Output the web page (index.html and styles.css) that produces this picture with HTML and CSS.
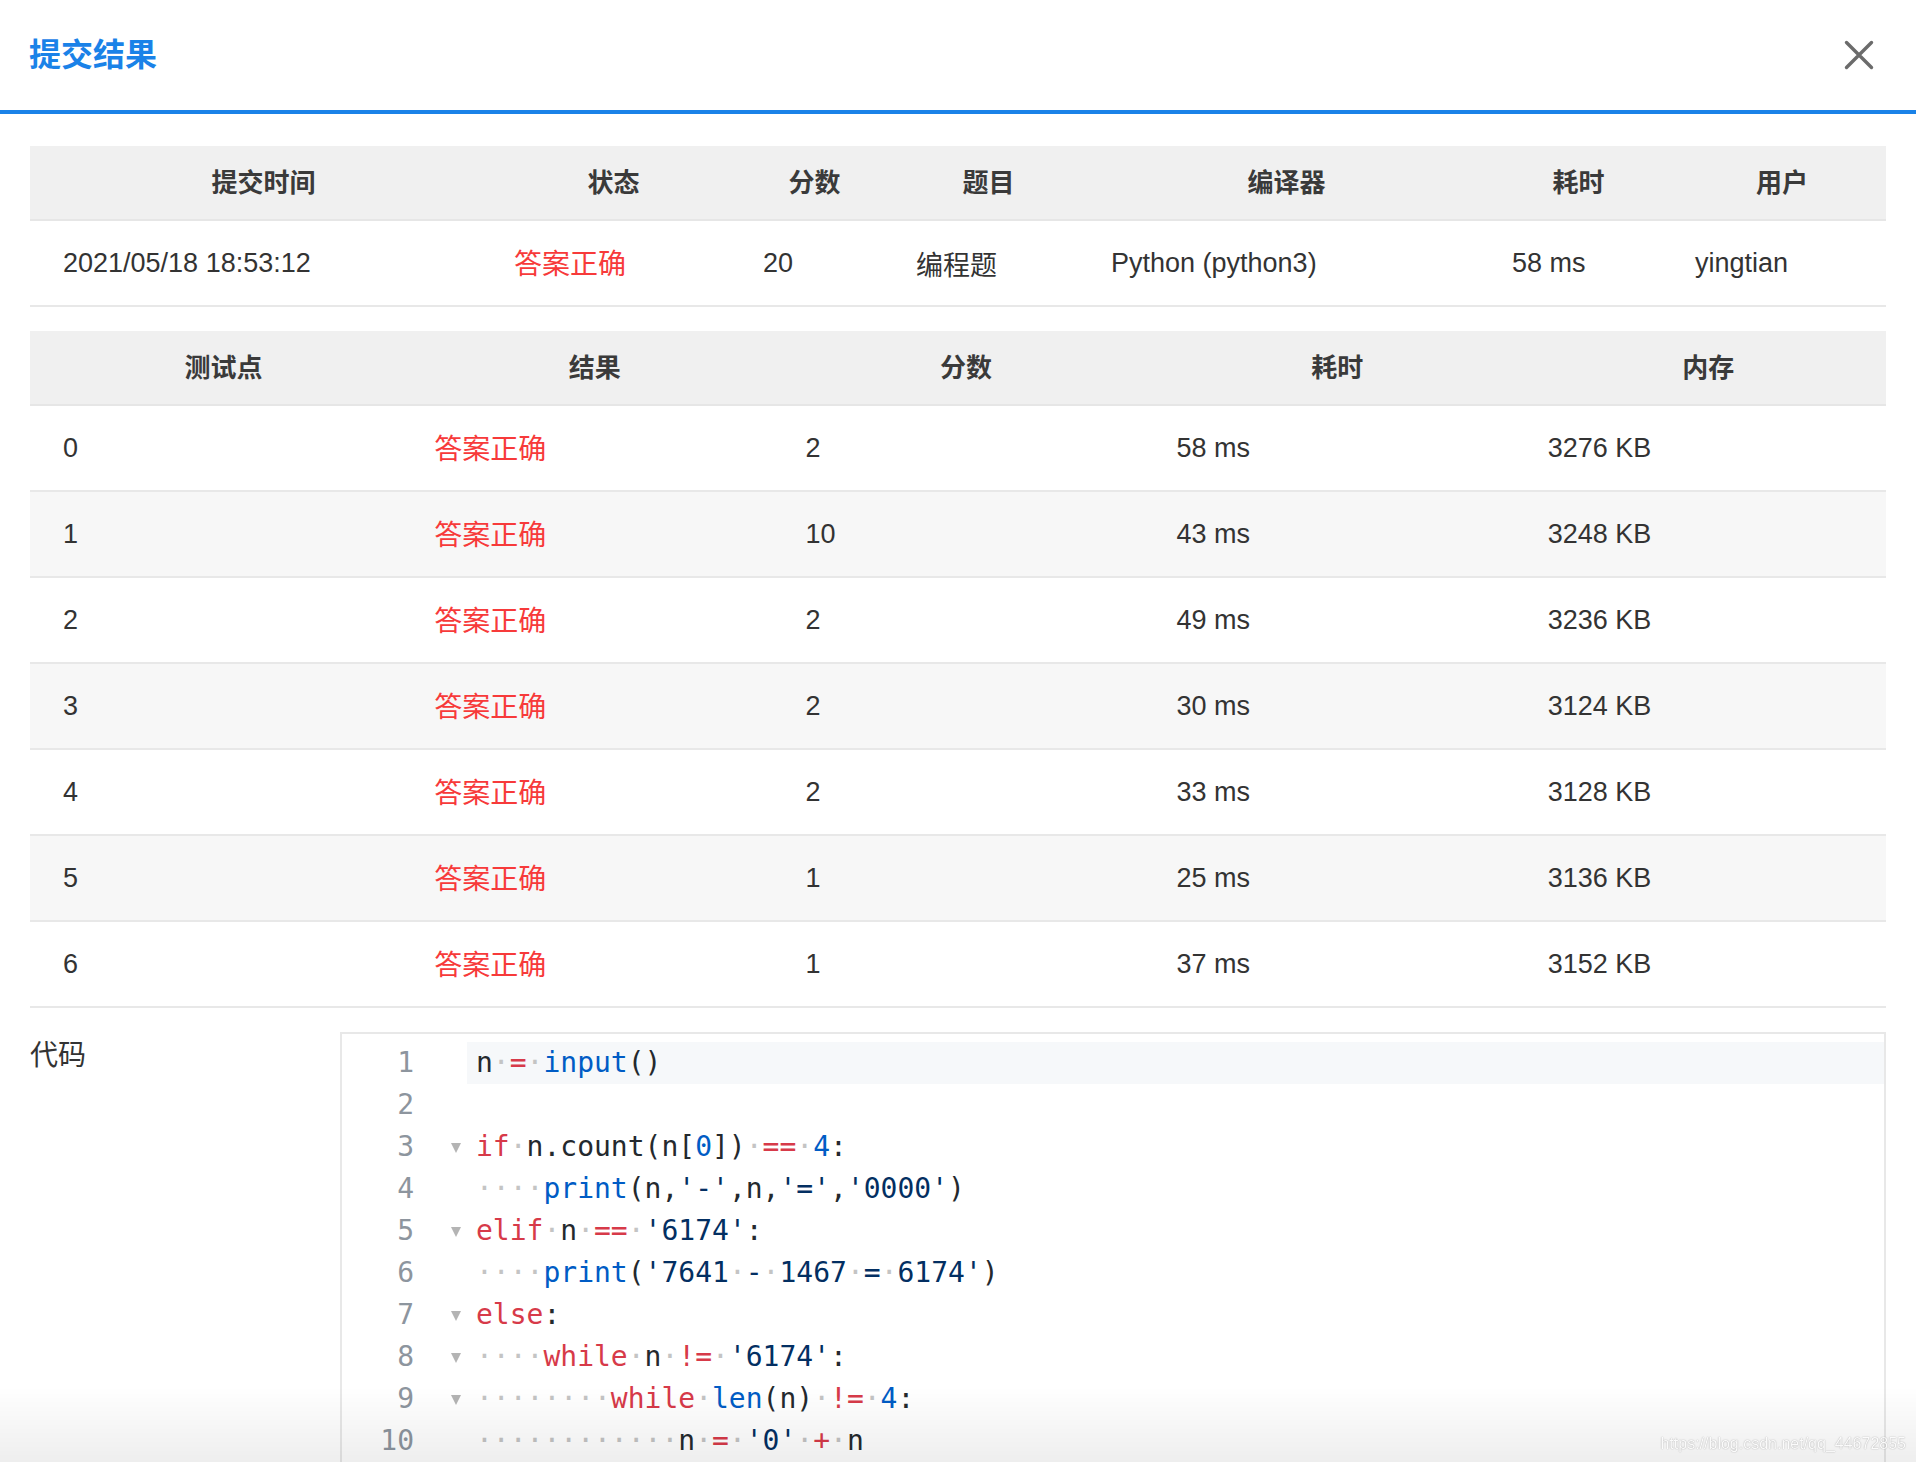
FILE: index.html
```html
<!DOCTYPE html>
<html lang="zh-CN">
<head>
<meta charset="utf-8">
<title>提交结果</title>
<link rel="stylesheet" href="styles.css">
</head>
<body>
<div class="dialog">
  <header class="dlg-head">
    <h1 class="dlg-title">提交结果</h1>
    <button class="dlg-close" type="button" aria-label="关闭">
      <svg width="30" height="30" viewBox="0 0 30 30"><path d="M2.5 2.5 L27.5 27.5 M27.5 2.5 L2.5 27.5" stroke="#6b6b6b" stroke-width="3.4" stroke-linecap="round" fill="none"/></svg>
    </button>
  </header>

  <main class="dlg-body">
    <table class="tbl tbl-summary">
      <colgroup>
        <col class="c-time"><col class="c-status"><col class="c-score"><col class="c-problem"><col class="c-compiler"><col class="c-cost"><col class="c-user">
      </colgroup>
      <thead>
        <tr><th>提交时间</th><th>状态</th><th>分数</th><th>题目</th><th>编译器</th><th>耗时</th><th>用户</th></tr>
      </thead>
      <tbody>
        <tr><td>2021/05/18 18:53:12</td><td class="ok">答案正确</td><td>20</td><td>编程题</td><td>Python (python3)</td><td>58 ms</td><td>yingtian</td></tr>
      </tbody>
    </table>

    <table class="tbl tbl-cases">
      <thead>
        <tr><th>测试点</th><th>结果</th><th>分数</th><th>耗时</th><th>内存</th></tr>
      </thead>
      <tbody>
        <tr><td>0</td><td class="ok">答案正确</td><td>2</td><td>58 ms</td><td>3276 KB</td></tr>
        <tr><td>1</td><td class="ok">答案正确</td><td>10</td><td>43 ms</td><td>3248 KB</td></tr>
        <tr><td>2</td><td class="ok">答案正确</td><td>2</td><td>49 ms</td><td>3236 KB</td></tr>
        <tr><td>3</td><td class="ok">答案正确</td><td>2</td><td>30 ms</td><td>3124 KB</td></tr>
        <tr><td>4</td><td class="ok">答案正确</td><td>2</td><td>33 ms</td><td>3128 KB</td></tr>
        <tr><td>5</td><td class="ok">答案正确</td><td>1</td><td>25 ms</td><td>3136 KB</td></tr>
        <tr><td>6</td><td class="ok">答案正确</td><td>1</td><td>37 ms</td><td>3152 KB</td></tr>
      </tbody>
    </table>

    <section class="code-sec">
      <div class="code-label">代码</div>
      <div class="editor">
        <div class="ln"><span class="num">1</span><span class="fold-cell"></span><span class="code active">n<span class="t-ws">·</span><span class="t-kw">=</span><span class="t-ws">·</span><span class="t-fn">input</span>()</span></div>
        <div class="ln"><span class="num">2</span><span class="fold-cell"></span><span class="code"></span></div>
        <div class="ln"><span class="num">3</span><span class="fold-cell"><i class="fold"></i></span><span class="code"><span class="t-kw">if</span><span class="t-ws">·</span>n.count(n[<span class="t-num">0</span>])<span class="t-ws">·</span><span class="t-kw">==</span><span class="t-ws">·</span><span class="t-num">4</span>:</span></div>
        <div class="ln"><span class="num">4</span><span class="fold-cell"></span><span class="code"><span class="t-ws">····</span><span class="t-fn">print</span>(n,<span class="t-str">'-'</span>,n,<span class="t-str">'='</span>,<span class="t-str">'0000'</span>)</span></div>
        <div class="ln"><span class="num">5</span><span class="fold-cell"><i class="fold"></i></span><span class="code"><span class="t-kw">elif</span><span class="t-ws">·</span>n<span class="t-ws">·</span><span class="t-kw">==</span><span class="t-ws">·</span><span class="t-str">'6174'</span>:</span></div>
        <div class="ln"><span class="num">6</span><span class="fold-cell"></span><span class="code"><span class="t-ws">····</span><span class="t-fn">print</span>(<span class="t-str">'7641<span class="t-ws">·</span>-<span class="t-ws">·</span>1467<span class="t-ws">·</span>=<span class="t-ws">·</span>6174'</span>)</span></div>
        <div class="ln"><span class="num">7</span><span class="fold-cell"><i class="fold"></i></span><span class="code"><span class="t-kw">else</span>:</span></div>
        <div class="ln"><span class="num">8</span><span class="fold-cell"><i class="fold"></i></span><span class="code"><span class="t-ws">····</span><span class="t-kw">while</span><span class="t-ws">·</span>n<span class="t-ws">·</span><span class="t-kw">!=</span><span class="t-ws">·</span><span class="t-str">'6174'</span>:</span></div>
        <div class="ln"><span class="num">9</span><span class="fold-cell"><i class="fold"></i></span><span class="code"><span class="t-ws">········</span><span class="t-kw">while</span><span class="t-ws">·</span><span class="t-fn">len</span>(n)<span class="t-ws">·</span><span class="t-kw">!=</span><span class="t-ws">·</span><span class="t-num">4</span>:</span></div>
        <div class="ln"><span class="num">10</span><span class="fold-cell"></span><span class="code"><span class="t-ws">············</span>n<span class="t-ws">·</span><span class="t-kw">=</span><span class="t-ws">·</span><span class="t-str">'0'</span><span class="t-ws">·</span><span class="t-kw">+</span><span class="t-ws">·</span>n</span></div>
      </div>
    </section>
  </main>

  <div class="fade"></div>
  <div class="watermark">https://blog.csdn.net/qq_44672855</div>
</div>
</body>
</html>
```

FILE: styles.css
```css
html, body {
  margin: 0;
  padding: 0;
  background: #ffffff;
  height: 1462px;
  overflow: hidden;
}

body {
  font-family: "Liberation Sans", "Noto Sans CJK SC", sans-serif;
  color: #333333;
}

.dialog {
  width: 1916px;
  height: 1462px;
  overflow: hidden;
}

/* Header */
.dlg-head {
  height: 110px;
  border-bottom: 4px solid #1a82e8;
  display: flex;
  align-items: center;
  justify-content: space-between;
  padding: 0 42px 0 29px;
}

.dlg-title {
  margin: 0 0 6px;
  font-family: "Noto Sans CJK SC", sans-serif;
  font-size: 32px;
  font-weight: 700;
  color: #1a82e8;
  line-height: 1;
}

.dlg-close {
  border: 0;
  background: transparent;
  padding: 0;
  width: 30px;
  height: 30px;
  display: flex;
  margin-top: -1px;
}

/* Body */
.dlg-body {
  padding: 32px 30px 0;
}

.tbl {
  width: 100%;
  table-layout: fixed;
  border-collapse: separate;
  border-spacing: 0;
  font-size: 27px;
  margin-bottom: 24px;
}

.tbl th {
  height: 69px;
  padding: 0 0 4px 16px;
  background: #f0f0f0;
  border-bottom: 2px solid #e6e6e6;
  text-align: center;
  font-family: "Noto Sans CJK SC", sans-serif;
  font-weight: 700;
  font-size: 26px;
  color: #3a3a3a;
}

.tbl td {
  height: 84px;
  padding: 0 0 0 33px;
  border-bottom: 2px solid #e8e8e8;
  text-align: left;
  color: #333333;
  white-space: nowrap;
}

.tbl tbody tr:nth-child(even) td {
  background: #f7f7f7;
}

.tbl td.ok {
  height: 82px;
  padding-bottom: 2px;
  color: #f73a3a;
  font-family: "Noto Sans CJK SC", sans-serif;
  font-size: 28px;
}

.c-time { width: 451px; }
.c-status { width: 249px; }
.c-score { width: 153px; }
.c-problem { width: 195px; }
.c-compiler { width: 401px; }
.c-cost { width: 183px; }
.c-user { width: 224px; }

/* Code section */
.code-sec {
  display: grid;
  grid-template-columns: 310px 1fr;
}

.code-label {
  font-family: "Noto Sans CJK SC", sans-serif;
  font-size: 28px;
  line-height: 42px;
  color: #333333;
}

.editor {
  border: 2px solid #e8e8e8;
  border-bottom: 0;
  padding: 8px 0 40px;
  font-family: "DejaVu Sans Mono", "Liberation Mono", monospace;
  font-size: 28px;
  line-height: 42px;
  color: #24292e;
}

.ln {
  display: grid;
  grid-template-columns: 72px 53px 1fr;
  height: 42px;
}

.num {
  text-align: right;
  color: #8d959e;
}

.fold-cell {
  display: flex;
  align-items: center;
  justify-content: flex-end;
  padding-right: 6px;
}

.fold {
  display: block;
  width: 0;
  height: 0;
  border-left: 5.5px solid transparent;
  border-right: 5.5px solid transparent;
  border-top: 10px solid #b4b4b4;
  margin-top: 2px;
}

.code {
  padding-left: 9px;
  white-space: pre;
}

.code.active {
  background: #f6f8fa;
}

.t-kw { color: #d73a49; }
.t-fn { color: #005cc5; }
.t-num { color: #005cc5; }
.t-str { color: #032f62; }
.t-ws { color: #c4c4c4; }

/* Overlays */
.fade {
  position: fixed;
  left: 0;
  right: 0;
  bottom: 0;
  height: 75px;
  background: linear-gradient(to bottom, rgba(0, 0, 0, 0), rgba(0, 0, 0, 0.065));
  pointer-events: none;
}

.watermark {
  position: fixed;
  right: 10px;
  bottom: 9px;
  font-family: "Liberation Sans", sans-serif;
  font-size: 16px;
  color: rgba(255, 255, 255, 0.95);
  text-shadow: 0 0 1px rgba(0, 0, 0, 0.3), 0 0 2px rgba(0, 0, 0, 0.15);
  pointer-events: none;
}
```
